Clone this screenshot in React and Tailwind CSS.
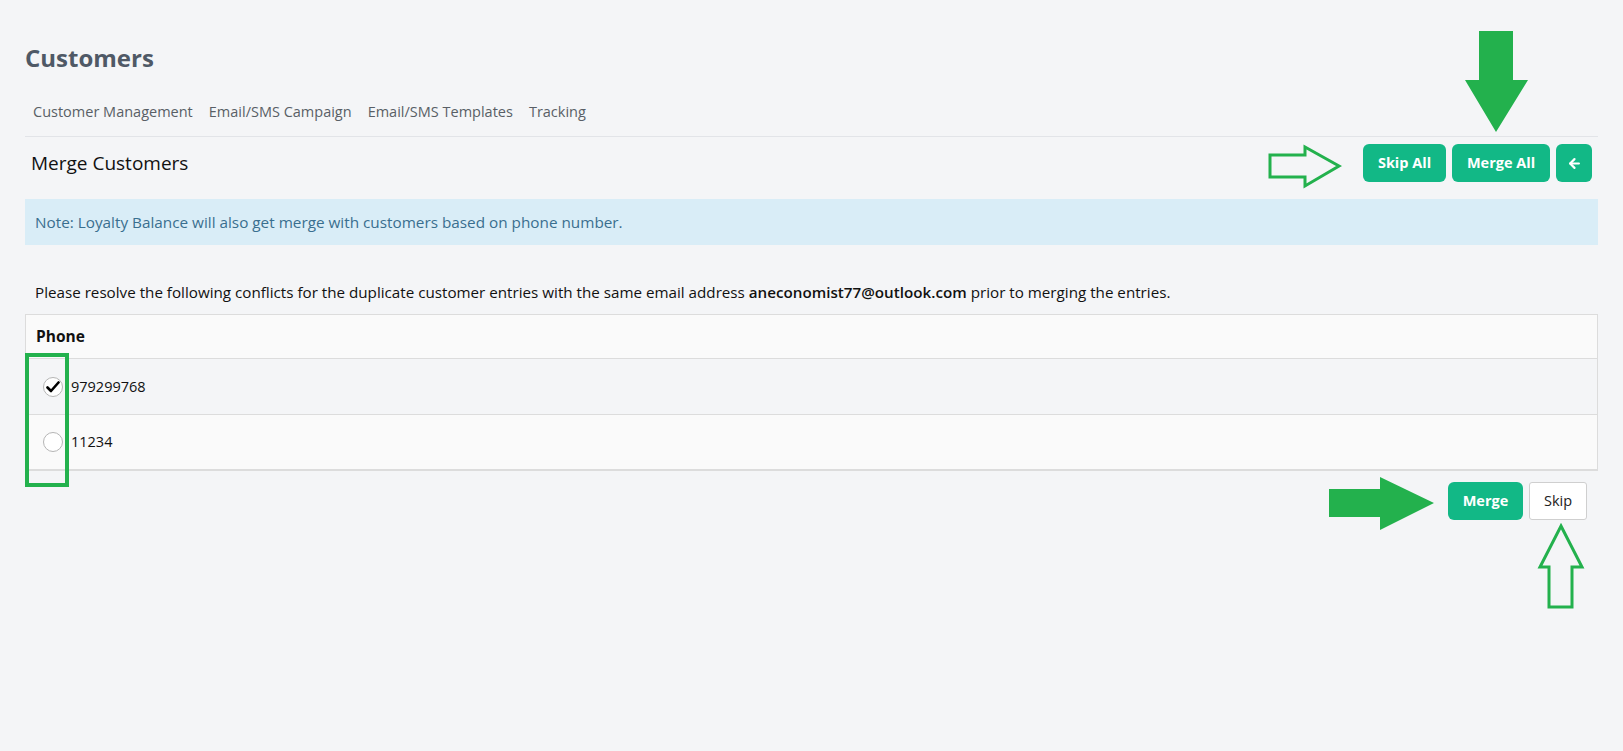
import { ArrowLeft } from 'lucide-react';

const FONT = { fontFamily: '"Open Sans", Lato, sans-serif' };

function Radio({ checked }) {
  return (
    <span className="w-5 h-5 rounded-full border border-[#b5b5b5] bg-white flex items-center justify-center flex-shrink-0">
      {checked && (
        <svg width="14" height="12" viewBox="0 0 14 12">
          <path d="M1.5 6.5 L5 10 L12.5 1.5" fill="none" stroke="#000" strokeWidth="2.6" strokeLinecap="round" strokeLinejoin="round" />
        </svg>
      )}
    </span>
  );
}

// green markup drawn over the screenshot
function Annotations() {
  const g = '#23b14d';
  return (
    <svg className="absolute left-0 top-0 pointer-events-none" width="1623" height="751">
      {/* solid down arrow above Merge All */}
      <polygon points="1479,31 1513,31 1513,80 1528,80 1496,132 1465,80 1479,80" fill={g} />
      {/* outlined right arrow before Skip All */}
      <polygon points="1270,155 1305,155 1305,147 1339,166 1305,186 1305,177 1270,177" fill="none" stroke={g} strokeWidth="3" strokeLinejoin="miter" />
      {/* box around radios */}
      <rect x="27" y="355" width="40" height="130" fill="none" stroke={g} strokeWidth="4" />
      {/* solid right arrow before Merge */}
      <polygon points="1329,489 1380,489 1380,477 1434,503 1380,530 1380,517 1329,517" fill={g} />
      {/* outlined up arrow below Skip */}
      <polygon points="1561,526 1582,567 1572,567 1572,607 1549,607 1549,567 1540,567" fill="none" stroke={g} strokeWidth="3" />
    </svg>
  );
}

export default function App() {
  return (
    <div className="relative min-h-[751px] bg-[#f4f5f7] px-[25px] pt-[42px]" style={FONT}>
      <h1 className="text-[24px] leading-8 font-bold text-[#4f5966]">Customers</h1>

      {/* Tabs */}
      <div className="mt-[28px] flex border-b border-[#e2e4e8] pb-[14px] text-[14.5px] leading-5 text-[#595f66]">
        {['Customer Management', 'Email/SMS Campaign', 'Email/SMS Templates', 'Tracking'].map(t => (
          <span key={t} className="px-[8px]">{t}</span>
        ))}
      </div>

      {/* Header row */}
      <div className="flex items-center justify-between pt-[7px] pl-[6px] pr-[6px]">
        <h2 className="text-[19px] font-medium text-[#111]">Merge Customers</h2>
        <div className="flex gap-[6px]">
          <button className="h-[38px] w-[83px] rounded-md bg-[#12b886] text-white text-[14.5px] font-bold">Skip All</button>
          <button className="h-[38px] w-[98px] rounded-md bg-[#12b886] text-white text-[14.5px] font-bold">Merge All</button>
          <button className="h-[38px] w-[36px] rounded-md bg-[#12b886] text-white flex items-center justify-center">
            <ArrowLeft className="w-[15px] h-[15px]" strokeWidth={3.5} />
          </button>
        </div>
      </div>

      {/* Note */}
      <div className="mt-[17px] h-[46px] flex items-center bg-[#d9edf7] px-[10px] text-[15.3px] text-[#3a6f8f]">
        Note: Loyalty Balance will also get merge with customers based on phone number.
      </div>

      <p className="mt-[36px] px-[10px] text-[15.2px] leading-[22px] text-[#111]">
        Please resolve the following conflicts for the duplicate customer entries with the same email address{' '}
        <span className="font-semibold">aneconomist77@outlook.com</span> prior to merging the entries.
      </p>

      {/* Table */}
      <div className="mt-[11px] border border-[#dcdcdc] border-b-2">
        <div className="h-[43px] flex items-center px-[10px] bg-[#fafafa] text-[15.5px] font-bold text-[#111]">Phone</div>
        <div className="h-[56px] flex items-center gap-[8px] pl-[17px] border-t border-[#dcdcdc] bg-[#f4f5f7] text-[14.5px] text-[#111]">
          <Radio checked />
          <span>979299768</span>
        </div>
        <div className="h-[55px] flex items-center gap-[8px] pl-[17px] border-t border-[#dcdcdc] bg-[#fafafa] text-[14.5px] text-[#111]">
          <Radio />
          <span>11234</span>
        </div>
      </div>

      <div className="mt-[11px] flex justify-end gap-[6px] pr-[11px]">
        <button className="h-[38px] w-[75px] rounded-md bg-[#12b886] text-white text-[14.5px] font-bold">Merge</button>
        <button className="h-[38px] w-[58px] rounded-[3px] border border-[#cfcfcf] bg-white text-[14.5px] text-[#222]">Skip</button>
      </div>

      <Annotations />
    </div>
  );
}
